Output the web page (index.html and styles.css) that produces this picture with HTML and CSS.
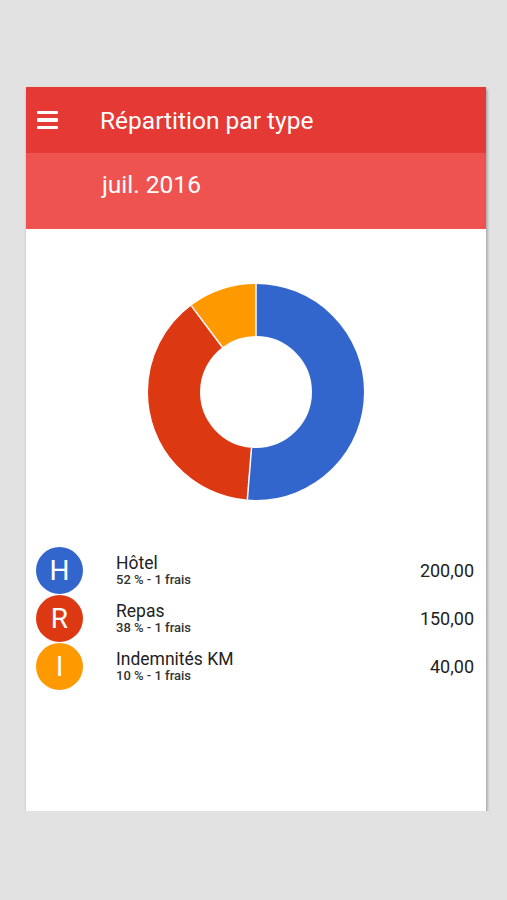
FILE: index.html
```html
<!DOCTYPE html>
<html lang="fr">
<head>
    <meta charset="UTF-8">
    <meta name="viewport" content="width=device-width, initial-scale=1.0">
    <title>Répartition par type</title>
    <link rel="stylesheet" href="styles.css">
</head>
<body>
    <div class="card">
        <div class="toolbar">
            <div class="menu-icon"><span></span><span></span><span></span></div>
            <h1>Répartition par type</h1>
        </div>
        <div class="period">juil. 2016</div>

        <div class="chart">
            <svg width="220" height="220" viewBox="0 0 220 220">
                <g transform="rotate(-90 110 110)">
                    <circle cx="110" cy="110" r="82" fill="none" stroke="#3366cc" stroke-width="52" stroke-dasharray="264.22 515.22"></circle>
                    <circle cx="110" cy="110" r="82" fill="none" stroke="#dc3912" stroke-width="52" stroke-dasharray="198.16 515.22" stroke-dashoffset="-264.22"></circle>
                    <circle cx="110" cy="110" r="82" fill="none" stroke="#ff9900" stroke-width="52" stroke-dasharray="52.84 515.22" stroke-dashoffset="-462.38"></circle>
                </g>
                <g stroke="#fff" stroke-width="1.5">
                    <line x1="110" y1="55" x2="110" y2="1"></line>
                    <line x1="105.51" y1="165.82" x2="101.34" y2="217.65"></line>
                    <line x1="76.38" y1="65.22" x2="45.16" y2="23.63"></line>
                </g>
            </svg>
        </div>

        <div class="legend">
            <div class="row">
                <div class="badge blue">H</div>
                <div class="info">
                    <div class="name">Hôtel</div>
                    <div class="detail">52 % - 1 frais</div>
                </div>
                <div class="amount">200,00</div>
            </div>
            <div class="row">
                <div class="badge red">R</div>
                <div class="info">
                    <div class="name">Repas</div>
                    <div class="detail">38 % - 1 frais</div>
                </div>
                <div class="amount">150,00</div>
            </div>
            <div class="row">
                <div class="badge orange">I</div>
                <div class="info">
                    <div class="name">Indemnités KM</div>
                    <div class="detail">10 % - 1 frais</div>
                </div>
                <div class="amount">40,00</div>
            </div>
        </div>
    </div>
</body>
</html>
```

FILE: styles.css
```css
body {
    margin: 0;
    padding: 87px 0 0 26px;
    background: #e2e2e2;
    font-family: Roboto, "Noto Sans", Arial, sans-serif;
}
.card {
    width: 460px;
    height: 724px;
    background: #fff;
    box-shadow: 1px 2px 3px rgba(0,0,0,0.35);
}
.toolbar {
    height: 66px;
    background: #e53935;
    display: flex;
    align-items: center;
    color: #fff;
}
.menu-icon { width: 21px; margin-left: 11px; display: flex; flex-direction: column; gap: 4px; }
.menu-icon span { display: block; height: 3.5px; background: #fff; border-radius: 1px; }
.toolbar h1 { margin: 0 0 0 42px; font-size: 24.5px; font-weight: 400; }
.period {
    height: 76px;
    background: #ef5350;
    color: #fff;
    font-size: 24.5px;
    line-height: 64px;
    padding-left: 76px;
}
.chart { display: flex; justify-content: center; margin-top: 53px; }
.chart svg { display: block; }
.legend { margin-top: 44px; }
.row { display: flex; align-items: center; height: 48px; }
.badge {
    width: 47px;
    height: 47px;
    border-radius: 50%;
    margin-left: 10px;
    color: #fff;
    font-size: 28px;
    display: flex;
    align-items: center;
    justify-content: center;
}
.blue { background: #3366cc; }
.red { background: #dc3912; }
.orange { background: #ff9900; }
.info { flex: 1; margin-left: 33px; color: #222; }
.name { font-size: 17.5px; line-height: 19px; }
.detail { font-size: 13px; line-height: 14px; font-weight: 500; color: #333; }
.amount { font-size: 18px; color: #222; margin-right: 12px; }
```
